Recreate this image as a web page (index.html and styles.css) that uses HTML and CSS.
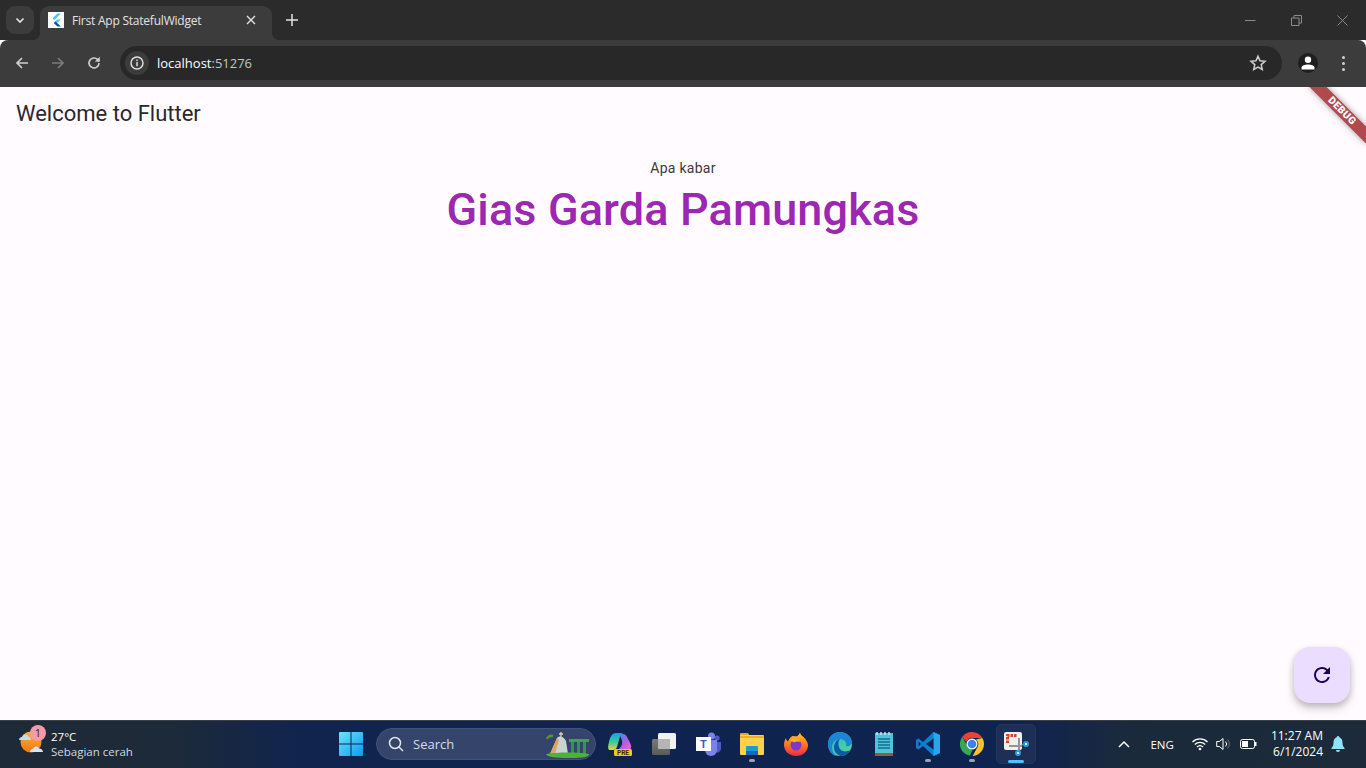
FILE: index.html
```html
<!DOCTYPE html>
<html lang="en">
  <head>
    <meta charset="UTF-8" />
    <meta name="viewport" content="width=device-width, initial-scale=1.0" />
    <title>First App StatefulWidget</title>
    <link rel="stylesheet" href="styles.css">
  </head>
  <body>
    <div class="tabstrip">
      <button class="tab-search">
        <svg width="12" height="12" viewBox="0 0 12 12"><path d="M2.5 4.5 6 8l3.500-3.500" fill="none" stroke="#e3e3e3" stroke-width="1.700"/></svg>
      </button>
      <div class="tab">
        <span class="favicon">
          <svg width="16" height="16" viewBox="0 0 16 16"><path d="M9.500 1.500h3.400L6.400 8 4.600 6.300z" fill="#47c5fb"/><path d="M9.500 7.400h3.400L9.200 11 7.400 9.300z" fill="#47c5fb"/><path d="M7.400 9.300 9.200 11l3.700 3.600H9.500L5.700 11z" fill="#00569e"/></svg>
        </span>
        <span class="tab-title">First App StatefulWidget</span>
        <svg class="tab-close" width="10" height="10" viewBox="0 0 10 10"><path d="M1 1l8 8M9 1l-8 8" stroke="#e3e3e3" stroke-width="1.400"/></svg>
      </div>
      <svg class="tab-new" width="12" height="12" viewBox="0 0 12 12"><path d="M6 0v12M0 6h12" stroke="#e3e3e3" stroke-width="1.500"/></svg>
      <div class="window-btns">
        <svg width="11" height="11" viewBox="0 0 11 11"><path d="M0 5.500h10.500" stroke="#8b8b8b"/></svg>
        <svg width="11" height="11" viewBox="0 0 11 11"><path d="M.5 3h7.500v7.500H.5zM3 3V.5h7.500V8H8" fill="none" stroke="#8b8b8b"/></svg>
        <svg width="11" height="11" viewBox="0 0 11 11"><path d="M.5.500l10 10M10.500.500l-10 10" stroke="#8b8b8b"/></svg>
      </div>
    </div>

    <div class="toolbar">
      <svg class="nav-icon" width="16" height="16" viewBox="0 0 16 16"><path d="M14 8H3M8 3 3 8l5 5" fill="none" stroke="#cfcfcf" stroke-width="1.700"/></svg>
      <svg class="nav-icon" width="16" height="16" viewBox="0 0 16 16"><path d="M2 8h11M8 3l5 5-5 5" fill="none" stroke="#7b7b7b" stroke-width="1.700"/></svg>
      <svg class="nav-icon" width="16" height="16" viewBox="0 0 16 16"><path d="M13 8a5 5 0 1 1-1.500-3.600L13 6" fill="none" stroke="#cfcfcf" stroke-width="1.600"/><path d="M13.800 1.800v5h-5z" fill="#cfcfcf"/></svg>
      <div class="omnibox">
        <span class="site-info">
          <svg width="14" height="14" viewBox="0 0 14 14"><circle cx="7" cy="7" r="6" fill="none" stroke="#e3e3e3" stroke-width="1.400"/><path d="M7 6v4.200M7 3.600v1.300" stroke="#e3e3e3" stroke-width="1.400"/></svg>
        </span>
        <span class="url">localhost<span class="url-port">:51276</span></span>
        <svg class="star" width="18" height="18" viewBox="0 0 18 18"><path d="m9 2.200 2 4.600 5 .5-3.800 3.300 1.100 4.900L9 13l-4.300 2.500 1.100-4.900L2 7.300l5-.5z" fill="none" stroke="#cfcfcf" stroke-width="1.500"/></svg>
      </div>
      <span class="avatar">
        <svg width="14" height="14" viewBox="0 0 14 14"><circle cx="7" cy="3.800" r="3.200" fill="#fff"/><path d="M.5 13.500v-1.800C.5 9.500 4 8.400 7 8.400s6.500 1.100 6.500 3.300v1.800z" fill="#fff"/></svg>
      </span>
      <span class="menu-dots"><i></i><i></i><i></i></span>
    </div>

    <main class="app">
      <h1 class="app-title">Welcome to Flutter</h1>
      <div class="content">
        <p class="greeting">Apa kabar</p>
        <p class="name">Gias Garda Pamungkas</p>
      </div>
      <div class="debug-banner"><span>DEBUG</span></div>
      <button class="fab">
        <svg width="24" height="24" viewBox="0 0 24 24"><path d="M17.650 6.350A7.958 7.958 0 0 0 12 4c-4.420 0-7.990 3.580-7.990 8s3.570 8 7.990 8c3.730 0 6.840-2.550 7.730-6h-2.080A5.990 5.990 0 0 1 12 18c-3.310 0-6-2.690-6-6s2.690-6 6-6c1.660 0 3.140.69 4.220 1.780L13 11h7V4l-2.350 2.350z" fill="#21005d"/></svg>
      </button>
    </main>

    <footer class="taskbar">
      <div class="weather">
        <span class="weather-icon">
          <svg width="28" height="28" viewBox="0 0 28 28">
            <defs><linearGradient id="sun" x1="0" y1="0" x2="0" y2="1"><stop offset="0" stop-color="#fbb03b"/><stop offset="1" stop-color="#ee7a12"/></linearGradient></defs>
            <circle cx="13" cy="12" r="10.500" fill="url(#sun)"/>
            <path d="M1 10c0-2 1.500-3 3-3 .8-3 5-3.500 6-.5 1.800-.2 3 1.500 3 3.500z" fill="#c3daf2"/>
            <path d="M12 22c0-2 1.500-3 3-3 .8-3 5-3.500 6-.5 1.800-.2 4 1.500 4 3.500z" fill="#d6e6f6"/>
          </svg>
          <span class="weather-badge">1</span>
        </span>
        <div class="weather-text">
          <span class="temp">27°C</span>
          <span class="cond">Sebagian cerah</span>
        </div>
      </div>

      <div class="task-center">
        <svg class="task-icon" width="24" height="24" viewBox="0 0 24 24">
          <defs><linearGradient id="win" x1="0" y1="0" x2="1" y2="1"><stop offset="0" stop-color="#6fe3f7"/><stop offset="1" stop-color="#0a9cf0"/></linearGradient></defs>
          <path d="M0 1a1 1 0 0 1 1-1h10.500v11.500H0zM12.500 0H23a1 1 0 0 1 1 1v10.500H12.500zM0 12.500h11.500V24H1a1 1 0 0 1-1-1zM12.500 12.500H24V23a1 1 0 0 1-1 1H12.500z" fill="url(#win)"/>
        </svg>
        <div class="search">
          <svg width="16" height="16" viewBox="0 0 16 16"><circle cx="7" cy="7" r="5.500" fill="none" stroke="#e6e6e6" stroke-width="1.500"/><path d="m11 11 4 4" stroke="#e6e6e6" stroke-width="1.500"/></svg>
          <span class="search-label">Search</span>
          <svg class="search-art" width="52" height="30" viewBox="0 0 52 30">
            <path d="M6 25 13 9c3-3 7-1 9 3l2 13z" fill="#c9d3cf"/>
            <path d="M6 25 13 9l2 2-4 14z" fill="#d9a860"/>
            <path d="M17 3v5M15 5h4" stroke="#d8d2b8" stroke-width="1.300"/>
            <path d="M3 10c1-3 4-3 6-3M9 7c-2-1-4 0-5 1" stroke="#4f9a33" stroke-width="2" fill="none"/>
            <path d="M25 10h20v3H25z" fill="#3fa648"/>
            <path d="M27 13h3v12h-3zM33 13h3v12h-3zM39 13h3v12h-3z" fill="#2f9a45"/>
            <path d="M2 25c10-2 34-2 43 0 0 3-6 4-20 4S3 28 2 25z" fill="#4db13e"/>
          </svg>
        </div>
        <svg class="task-icon" width="24" height="24" viewBox="0 0 24 24">
          <defs>
            <linearGradient id="cop-l" x1="0" y1="0" x2="0" y2="1"><stop offset="0" stop-color="#1b9de8"/><stop offset=".55" stop-color="#3ccf8e"/><stop offset="1" stop-color="#f1d23a"/></linearGradient>
            <linearGradient id="cop-r" x1="0" y1="0" x2="1" y2="1"><stop offset="0" stop-color="#3a8fe8"/><stop offset=".55" stop-color="#b65be0"/><stop offset="1" stop-color="#f06ec0"/></linearGradient>
          </defs>
          <path d="M10 2h5c2 0 3 1 4 3 2 4 5 8 4 11-1 2-3 2-5 2h-8c2-2 5-5 4-9-.5-3-2-6-4-7z" fill="url(#cop-r)"/>
          <path d="M8 1h7c-2 1-3 3-4 7l-2 7c-1 2-2 3-4 3H2C0 18-.5 15 1 10 2 5 4 1 8 1z" fill="url(#cop-l)"/>
          <rect x="6" y="17" width="18" height="7" rx="1.500" fill="#f7c51e"/>
          <text x="15" y="23" class="pre-label">PRE</text>
        </svg>
        <svg class="task-icon" width="24" height="24" viewBox="0 0 24 24">
          <defs><linearGradient id="back" x1="0" y1="0" x2="0" y2="1"><stop offset="0" stop-color="#7a7a7a"/><stop offset="1" stop-color="#5a5a5a"/></linearGradient></defs>
          <rect x="0" y="7" width="18" height="16" rx="1.500" fill="url(#back)"/>
          <rect x="6" y="1" width="18" height="16" rx="1.500" fill="#f2f2f2"/>
          <rect x="6" y="7" width="12" height="10" fill="#b5b5b5"/>
        </svg>
        <svg class="task-icon" width="26" height="24" viewBox="0 0 26 24">
          <circle cx="21" cy="6" r="2.600" fill="#5059c9"/>
          <path d="M17 10h8v7a4 4 0 0 1-6 3z" fill="#5059c9"/>
          <circle cx="15.500" cy="4" r="3.500" fill="#7b83eb"/>
          <path d="M9 8h12v10a6 6 0 0 1-12 0z" fill="#7b83eb"/>
          <rect x="0" y="5" width="15" height="14" fill="#fff"/>
          <text x="7.500" y="16" class="teams-label">T</text>
        </svg>
        <span class="task-slot">
          <svg width="24" height="24" viewBox="0 0 24 24">
            <path d="M0 2a1 1 0 0 1 1-1h7l2 3h-10z" fill="#e2a82b"/>
            <rect x="0" y="3" width="24" height="20" rx="1" fill="#fbd24b"/>
            <rect x="0" y="4" width="24" height="2" fill="#f3ad25"/>
            <path d="M7 14h10a1 1 0 0 1 1 1v8H6v-8a1 1 0 0 1 1-1z" fill="#1c9ad6"/>
            <rect x="6" y="19" width="12" height="4" fill="#0f6cb5"/>
          </svg>
          <i class="run-dot"></i>
        </span>
        <svg class="task-icon" width="24" height="24" viewBox="0 0 24 24">
          <defs><linearGradient id="fx" x1="0" y1="0" x2="0" y2="1"><stop offset="0" stop-color="#ffcb30"/><stop offset=".5" stop-color="#ff7a1f"/><stop offset="1" stop-color="#f0264e"/></linearGradient></defs>
          <path d="M12 24C5 24 0 19 0 12.500 0 10 1 7.500 2 6c0 2 1 3 2 3.500C5 6 8 4 9 4c2 0 4 1 5-.5 1-1 2-2.500 2-3.500 0 3 3 4 5 6.500 2 3 3 4.500 3 7C24 19 19 24 12 24z" fill="url(#fx)"/>
          <circle cx="12" cy="13" r="5.500" fill="#7e38c9"/>
          <path d="M6 8c3-2 8-2 11 2-3-1-5-.5-7 .5z" fill="#ffb029"/>
        </svg>
        <svg class="task-icon" width="24" height="24" viewBox="0 0 24 24">
          <defs><linearGradient id="edge" x1="0" y1="0" x2="1" y2="1"><stop offset="0" stop-color="#27b5d8"/><stop offset="1" stop-color="#55d98a"/></linearGradient></defs>
          <circle cx="12" cy="12" r="12" fill="url(#edge)"/>
          <path d="M0 12C0 5 5 0 12 0c6 0 11 4 12 10 0 3-3 5-6 4 1-3-1-7-6-7-5 0-8 4-8 9 0 3 2 6 4 8C3 23 0 18 0 12z" fill="#1a86d6"/>
          <path d="M12 24c-4-2-6-5-6-8 0-5 3-9 6-9-2 2-2 5-1 8 1 4 6 6 11 3-2 4-6 6-10 6z" fill="#0f5aa8"/>
        </svg>
        <svg class="task-icon notepad" width="18" height="24" viewBox="0 0 18 24">
          <rect x="0" y="1" width="18" height="23" fill="#4fc3dc"/>
          <rect x="0" y="21" width="18" height="3" fill="#9a5a2a"/>
          <path d="M2 0v3M6 0v3M10 0v3M14 0v3" stroke="#bfeaf3" stroke-width="1.500"/>
          <path d="M3 7h12M3 10h12M3 13h12M3 16h12" stroke="#126f8c" stroke-width="1.500"/>
        </svg>
        <span class="task-slot">
          <svg width="24" height="24" viewBox="0 0 24 24">
            <path d="M17.500 0 24 3v18l-6.500 3L7 14l-4.500 3.500L0 16V8l2.500-1.500L7 10z" fill="#0e7fd0"/>
            <path d="M17.500 0 24 3v18l-6.500 3z" fill="#28a5ec"/>
            <path d="M17.500 6.500v11L10 12z" fill="#0f2350"/>
            <path d="M2.500 9.500v5L5 12z" fill="#0f2350"/>
          </svg>
          <i class="run-dot"></i>
        </span>
        <span class="task-slot">
          <svg width="24" height="24" viewBox="0 0 24 24">
            <path d="M12 0a12 12 0 0 1 10.400 6H12a6 6 0 0 0-5.700 4.100L2.300 4.800A12 12 0 0 1 12 0z" fill="#ea4335"/>
            <path d="M22.400 6A12 12 0 0 1 12.600 24l4.600-8.500A6 6 0 0 0 16 7.500z" fill="#fbc02d"/>
            <path d="M2.300 4.800 7.400 14a6 6 0 0 0 5.200 4l-2.800 5.800A12 12 0 0 1 2.300 4.800z" fill="#34a853"/>
            <circle cx="12" cy="12" r="5.500" fill="#fff"/>
            <circle cx="12" cy="12" r="4.300" fill="#3b82f0"/>
          </svg>
          <i class="run-dot"></i>
        </span>
        <span class="task-slot active">
          <svg width="28" height="28" viewBox="0 0 28 28">
            <rect x="2" y="2" width="18" height="18" rx="2" fill="#f0f0f0"/>
            <path d="M5.500 13V5.500H15" fill="none" stroke="#d9432c" stroke-width="3" stroke-dasharray="2.500 1"/>
            <path d="M7 16h13M17 8v14" stroke="#8e959c" stroke-width="2"/>
            <path d="M17 16l6-2M17 16l-1 6" stroke="#8e959c" stroke-width="1"/>
            <circle cx="24" cy="14" r="2" fill="#fff" stroke="#2c9be0" stroke-width="2"/>
            <circle cx="16" cy="23" r="2" fill="#fff" stroke="#2c9be0" stroke-width="2"/>
          </svg>
          <i class="run-bar"></i>
        </span>
      </div>

      <div class="tray">
        <svg class="tray-up" width="12" height="8" viewBox="0 0 12 8"><path d="M1 7l5-5 5 5" fill="none" stroke="#fff" stroke-width="1.500"/></svg>
        <span class="lang">ENG</span>
        <div class="tray-icons">
          <svg width="16" height="14" viewBox="0 0 16 14"><path d="M.5 5a10.500 10.500 0 0 1 15 0M2.800 7.500a7.300 7.300 0 0 1 10.400 0M5 10a4 4 0 0 1 6 0" fill="none" stroke="#fff" stroke-width="1.200"/><circle cx="8" cy="12" r="1.300" fill="#fff"/></svg>
          <svg width="16" height="14" viewBox="0 0 16 14"><path d="M.7 4.500h2.600L7 1.500v11l-3.700-3H.7z" fill="none" stroke="#fff"/><path d="M9.500 4.500a3.500 3.500 0 0 1 0 5" fill="none" stroke="#fff"/><path d="M11.500 2.500a6.500 6.500 0 0 1 0 9" fill="none" stroke="#6d7680"/></svg>
          <svg width="17" height="10" viewBox="0 0 17 10"><rect x=".5" y=".5" width="14" height="9" rx="2" fill="none" stroke="#fff"/><rect x="2" y="2" width="6" height="6" fill="#fff"/><rect x="15" y="3" width="1.500" height="4" fill="#fff"/></svg>
        </div>
        <div class="clock"><span>11:27 AM</span><span>6/1/2024</span></div>
        <svg class="bell" width="14" height="16" viewBox="0 0 14 16"><path d="M7 0a1.200 1.200 0 0 1 1.200 1.300C10.500 2 11.500 4 11.500 6.500c0 2.500.5 4 2 5.500v1H.5v-1c1.500-1.500 2-3 2-5.500C2.500 4 3.500 2 5.800 1.300A1.200 1.200 0 0 1 7 0zM5 14h4a2 2 0 0 1-4 0z" fill="#8fe3fb"/></svg>
      </div>
    </footer>
  </body>
</html>
```

FILE: styles.css
```css
* {
  box-sizing: border-box;
}

html,
body {
  margin: 0;
  height: 100%;
}

body {
  display: flex;
  flex-direction: column;
  height: 768px;
  overflow: hidden;
  font-family: Roboto, sans-serif;
  background: #fffbff;
}

/* browser chrome */
.tabstrip {
  display: flex;
  align-items: flex-start;
  height: 40px;
  flex-shrink: 0;
  padding: 6px 0 0 6px;
  background: #2b2b2b;
}

.tab-search {
  width: 28px;
  height: 28px;
  padding: 0;
  display: flex;
  align-items: center;
  justify-content: center;
  border: none;
  border-radius: 9px;
  background: #3c3c3c;
}

.tab {
  position: relative;
  display: flex;
  align-items: center;
  width: 232px;
  height: 34px;
  margin-left: 6px;
  padding: 0 16px 6px 8px;
  border-radius: 9px 9px 0 0;
  background: #3c3c3c;
}

.tab::before,
.tab::after {
  content: "";
  position: absolute;
  bottom: 0;
  width: 8px;
  height: 8px;
}

.tab::before {
  left: -8px;
  background: radial-gradient(circle at 0 0, transparent 8px, #3c3c3c 8px);
}

.tab::after {
  right: -8px;
  background: radial-gradient(circle at 100% 0, transparent 8px, #3c3c3c 8px);
}

.favicon {
  display: flex;
  width: 16px;
  height: 16px;
  background: #fff;
}

.tab-title {
  margin-left: 8px;
  flex: 1;
  font: 12px "Open Sans", "Liberation Sans", sans-serif;
  letter-spacing: -0.22px;
  color: #e3e3e3;
}

.tab-new {
  margin: 8px 0 0 14px;
}

.window-btns {
  display: flex;
  gap: 35px;
  margin: 9px 18px 0 auto;
}

.toolbar {
  display: flex;
  align-items: center;
  height: 47px;
  flex-shrink: 0;
  padding: 0 0 1px 14px;
  background: #3c3c3c;
  border-radius: 8px 8px 0 0;
}

.nav-icon {
  margin-right: 20px;
}

.omnibox {
  display: flex;
  align-items: center;
  width: 1162px;
  height: 34px;
  margin-left: -2px;
  padding: 0 15px 0 5px;
  border-radius: 17px;
  background: #282828;
}

.site-info {
  display: flex;
  align-items: center;
  justify-content: center;
  width: 24px;
  height: 24px;
  border-radius: 50%;
  background: #3c3c3c;
}

.url {
  margin-left: 8px;
  flex: 1;
  font: 13px "Open Sans", "Liberation Sans", sans-serif;
  color: #fff;
}

.url-port {
  color: #c4c7c5;
}

.avatar {
  display: flex;
  align-items: center;
  justify-content: center;
  width: 20px;
  height: 20px;
  margin-left: 16px;
  border-radius: 50%;
  background: #1f1f1f;
}

.menu-dots {
  display: flex;
  flex-direction: column;
  gap: 3px;
  margin-left: 24px;
}

.menu-dots i {
  width: 3px;
  height: 3px;
  border-radius: 50%;
  background: #d0d0d0;
}

/* flutter app */
.app {
  position: relative;
  flex: 1;
  display: flex;
  flex-direction: column;
  overflow: hidden;
  background: #fffbff;
}

.app-title {
  margin: 0;
  padding: 13px 16px 0;
  font-size: 22px;
  font-weight: 400;
  line-height: 28px;
  color: #2a282d;
}

.content {
  display: flex;
  flex-direction: column;
  align-items: center;
  margin-top: 30px;
}

.greeting {
  margin: 0;
  font-size: 14px;
  line-height: 20px;
  letter-spacing: 0.25px;
  color: #3a383e;
}

.name {
  margin: 6px 0 0;
  font-size: 45px;
  font-weight: 500;
  line-height: 52px;
  letter-spacing: 0.13px;
  color: #9c27b0;
}

.debug-banner {
  position: absolute;
  top: 18px;
  right: -16px;
  width: 80px;
  height: 12px;
  display: flex;
  align-items: center;
  justify-content: center;
  transform: rotate(45deg);
  background: #b04a4f;
  box-shadow: 0 0 6px rgba(0, 0, 0, 0.4);
}

.debug-banner span {
  font: 900 10.2px/12px Roboto, sans-serif;
  letter-spacing: 0.5px;
  color: #fff;
}

.fab {
  position: absolute;
  right: 16px;
  bottom: 17px;
  width: 56px;
  height: 56px;
  padding: 0;
  display: flex;
  align-items: center;
  justify-content: center;
  border: none;
  border-radius: 16px;
  background: #eaddff;
  box-shadow: 0 3px 6px rgba(0, 0, 0, 0.2), 0 6px 12px rgba(0, 0, 0, 0.12);
}

/* windows taskbar */
.taskbar {
  position: relative;
  display: flex;
  align-items: center;
  justify-content: space-between;
  height: 48px;
  flex-shrink: 0;
  padding-bottom: 1px;
  border-top: 1px solid #3a4048;
  background: linear-gradient(90deg, #1e2a37 0, #1d2a39 170px, #10244e 300px, #0f2350 1020px, #1b2a3b 1130px, #1c2a39 100%);
  color: #fff;
  font-family: "Open Sans", "Noto Sans", sans-serif;
}

.weather {
  display: flex;
  align-items: center;
  padding-left: 18px;
}

.weather-icon {
  position: relative;
  display: flex;
  width: 28px;
  height: 28px;
}

.weather-badge {
  position: absolute;
  top: -5px;
  right: 0;
  width: 16px;
  height: 16px;
  border-radius: 50%;
  background: #f79aa8;
  color: #3a1a20;
  font-size: 11px;
  line-height: 16px;
  text-align: center;
}

.weather-text {
  display: flex;
  flex-direction: column;
  margin-left: 5px;
  font-size: 11.5px;
  line-height: 15px;
}

.cond {
  color: #d5d9de;
}

.task-center {
  position: absolute;
  left: 339px;
  top: 0;
  height: 46px;
  display: flex;
  align-items: center;
  gap: 20px;
}

.task-center > svg,
.task-center > span {
  flex-shrink: 0;
}

.task-icon.notepad {
  margin: 0 3px;
}

.task-center svg[width="26"] {
  margin-right: -2px;
}

.search {
  display: flex;
  align-items: center;
  width: 220px;
  height: 32px;
  margin: 0 -8px 0 -7px;
  padding: 0 0 0 11px;
  border-radius: 16px;
  background: #34446b;
  border: 1px solid #43527a;
}

.search-label {
  margin-left: 9px;
  flex: 1;
  font-size: 13px;
  color: #d8dce4;
}

.search-art {
  margin-right: -1px;
}

.pre-label {
  font: 700 6.5px Roboto, sans-serif;
  fill: #3a2a00;
  text-anchor: middle;
}

.teams-label {
  font: 700 11px Roboto, sans-serif;
  fill: #4b53bc;
  text-anchor: middle;
}

.task-slot {
  position: relative;
  display: flex;
  align-items: center;
  justify-content: center;
}

.task-slot.active {
  width: 40px;
  height: 40px;
  margin: 0 -8px;
  border: 1px solid #26355a;
  border-radius: 5px;
  background: #1d2f55;
}

.run-dot {
  position: absolute;
  left: 50%;
  bottom: -6px;
  width: 6px;
  height: 3px;
  margin-left: -3px;
  border-radius: 2px;
  background: #9aa3b2;
}

.run-bar {
  position: absolute;
  left: 11px;
  bottom: 0;
  width: 16px;
  height: 3px;
  border-radius: 2px;
  background: #4cc2ff;
}

.tray {
  display: flex;
  align-items: center;
  padding-right: 21px;
}

.tray-up {
  margin-right: 20px;
}

.lang {
  margin: 1px 18px 0 0;
  font-size: 11.5px;
}

.tray-icons {
  display: flex;
  align-items: center;
  gap: 8px;
  margin-right: 14px;
}

.clock {
  display: flex;
  flex-direction: column;
  align-items: flex-end;
  font-size: 12px;
  line-height: 16px;
}

.bell {
  margin-left: 8px;
}
```
